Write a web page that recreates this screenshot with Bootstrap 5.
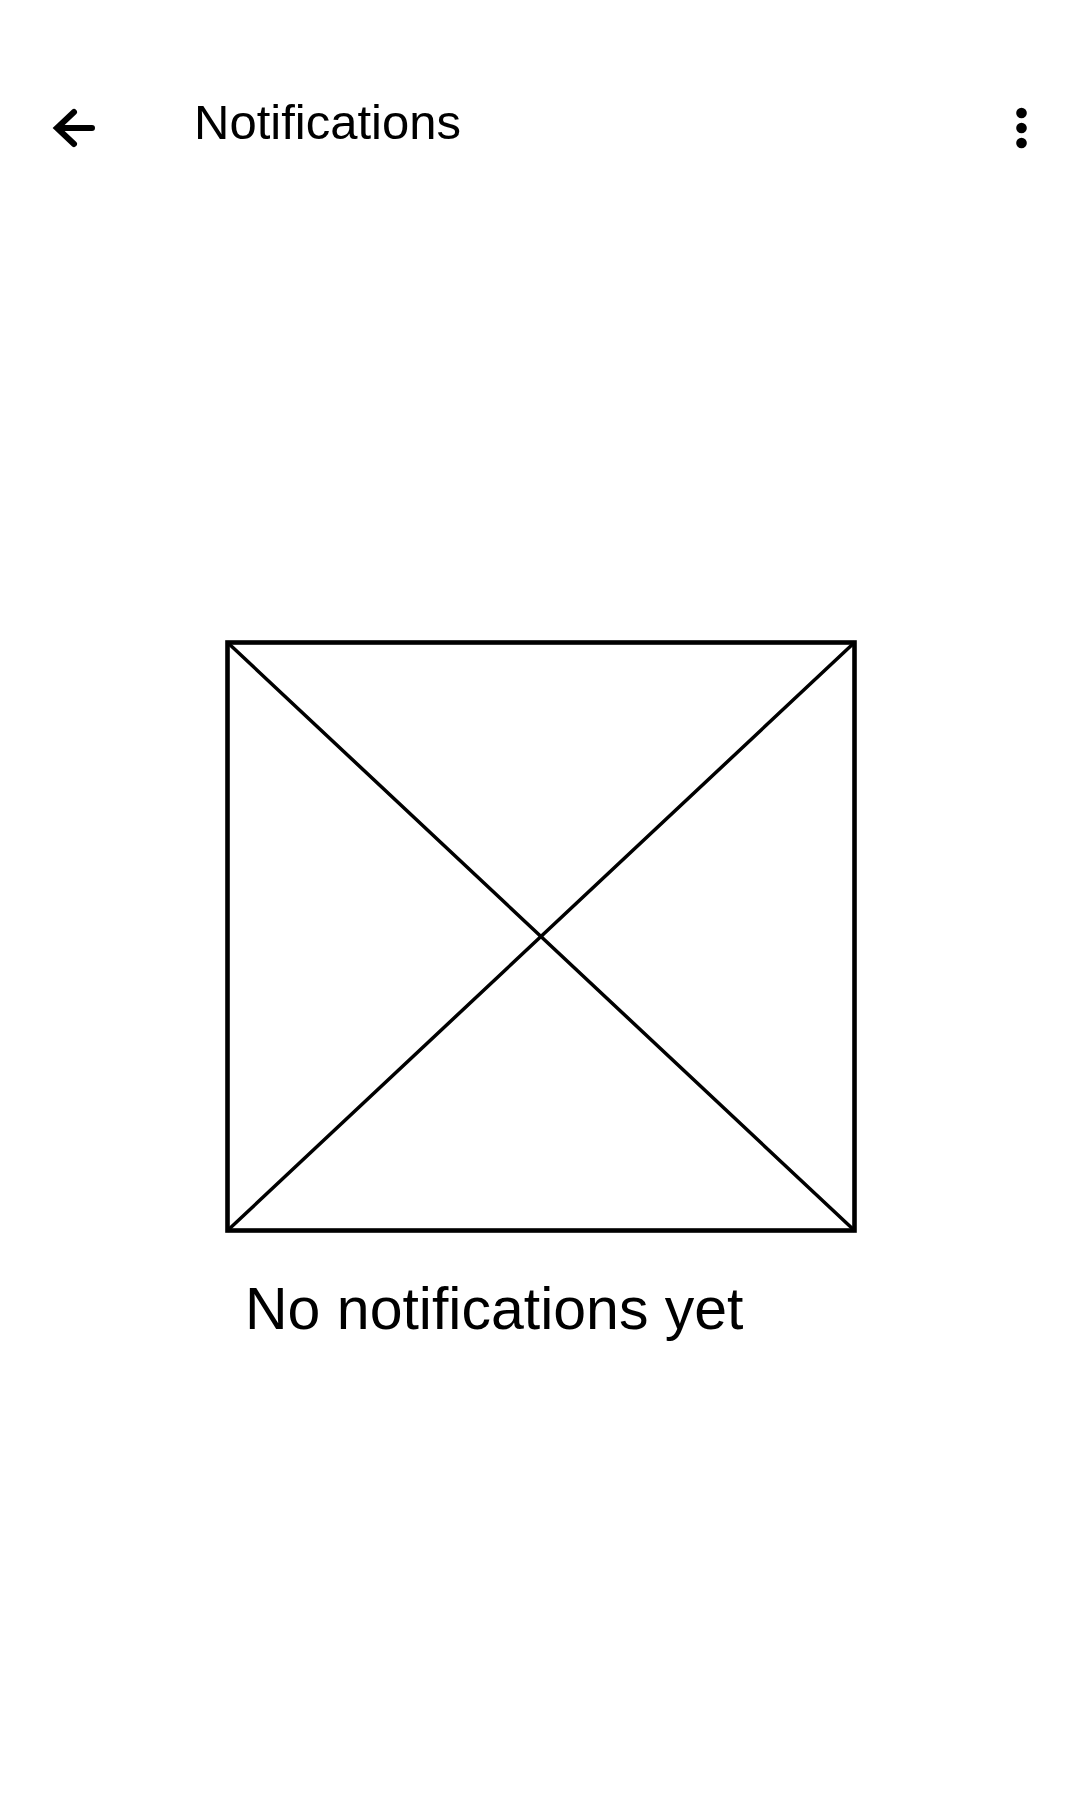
<!DOCTYPE html>
<html lang="en">
<head>
<meta charset="utf-8">
<meta name="viewport" content="width=device-width, initial-scale=1">
<title>Notifications</title>
<link href="https://cdn.jsdelivr.net/npm/bootstrap@5.3.0/dist/css/bootstrap.min.css" rel="stylesheet">
<style>
body { font-family: "Liberation Sans", Arial, sans-serif; color: #000; background: #fff; }
.app-bar { padding: 92px 48px 0; }
.icon-btn { width: 52px; height: 72px; color: #000; }
.bar-title { font-size: 49px; line-height: 60px; margin-left: 94px; }
.empty-state { max-width: 634px; margin-top: 474px; }
.empty-text { font-size: 59px; line-height: 72px; padding: 37px 0 0 22px; }
</style>
</head>
<body>
<header class="app-bar d-flex align-items-start">
  <button type="button" class="btn icon-btn border-0 p-0 d-flex" aria-label="Back">
    <svg width="52" height="72" viewBox="0 0 52 72" fill="none" stroke="currentColor" stroke-width="6" stroke-linecap="round" aria-hidden="true"><path d="M44 36H11M26 20L9 36L26 52"/></svg>
  </button>
  <h1 class="bar-title fw-normal mb-0 me-auto">Notifications</h1>
  <button type="button" class="btn icon-btn border-0 p-0 d-flex" aria-label="More options">
    <svg width="52" height="72" viewBox="0 0 52 72" fill="currentColor" aria-hidden="true"><circle cx="41.500" cy="21" r="5.300"/><circle cx="41.500" cy="36" r="5.300"/><circle cx="41.500" cy="51" r="5.300"/></svg>
  </button>
</header>
<main class="empty-state mx-auto">
  <svg class="d-block w-100 h-auto" viewBox="0 0 634 598" fill="none" stroke="#000" role="img" aria-label="Image placeholder">
    <rect x="4.500" y="4.500" width="627" height="588" stroke-width="4.600"/>
    <path d="M4 4L632 593M632 4L4 593" stroke-width="3.500"/>
  </svg>
  <p class="empty-text mb-0">No notifications yet</p>
</main>
<script src="https://cdn.jsdelivr.net/npm/bootstrap@5.3.0/dist/js/bootstrap.bundle.min.js"></script>
</body>
</html>
